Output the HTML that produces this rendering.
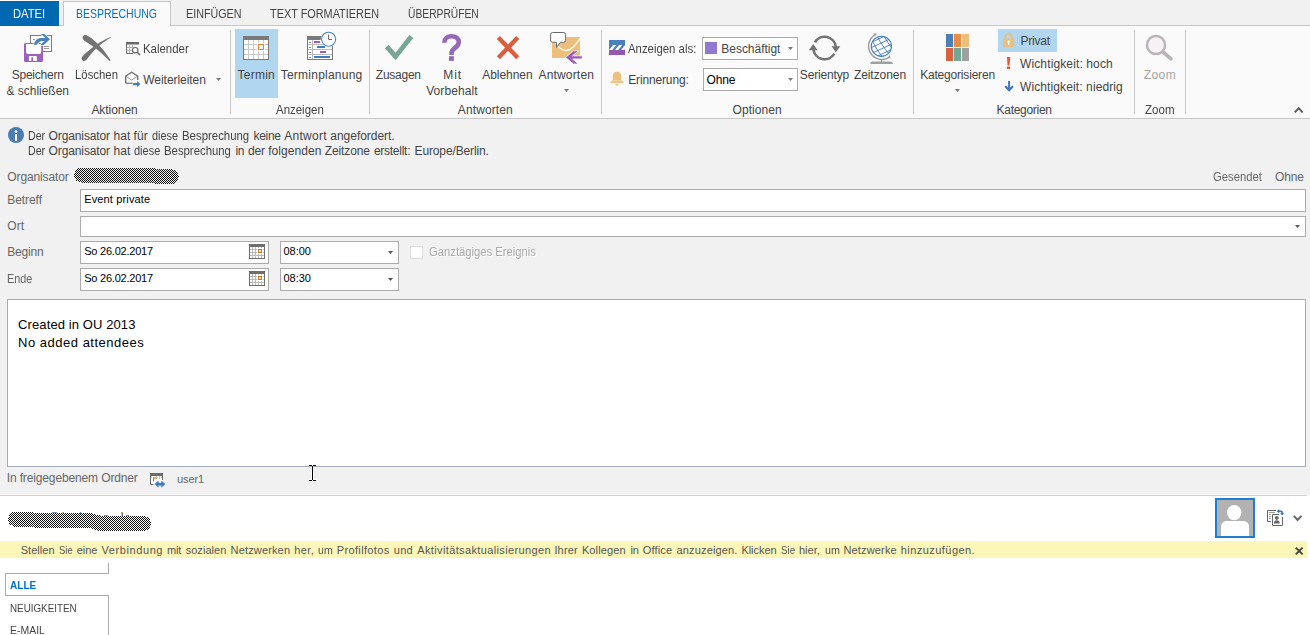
<!DOCTYPE html>
<html lang="de">
<head>
<meta charset="utf-8">
<title>Event private - Besprechung</title>
<style>
html,body{margin:0;padding:0;background:#fff;}
body{width:1310px;height:635px;overflow:hidden;font-family:"Liberation Sans",sans-serif;}
#app{position:relative;width:1310px;height:635px;overflow:hidden;background:#fff;}
#app div,#app span,#app svg{position:absolute;box-sizing:border-box;}
.t{white-space:pre;}
.inp{background:#fff;border:1px solid #ababab;}
.sep{width:1px;background:#c8c8c8;top:30px;height:84px;}
.hl{background:#b1d6f0;}
.t{transform-origin:0 0;}
.dis{text-shadow:1px 1px 0 #fff;}

</style>
</head>
<body>
<div id="app">
<div style="left:0;top:0;width:1310px;height:26px;background:#f1f1f1;"></div>
<div style="left:0;top:25px;width:1310px;height:1px;background:#c6c6c6;"></div>
<div style="left:0;top:0;width:60px;height:25px;background:#fcfbf9;"></div>
<div style="left:0;top:1px;width:59px;height:25px;background:#0067b1;"></div>
<div style="left:63px;top:1px;width:108px;height:25px;background:#fafafa;border:1px solid #c6c6c6;border-bottom:none;"></div>
<div style="left:0;top:26px;width:1310px;height:92px;background:#fafafa;"></div>
<div style="left:0;top:118px;width:1310px;height:1px;background:#c6c6c6;"></div>
<div style="left:0;top:119px;width:1310px;height:376px;background:#f1f1f1;"></div>
<div style="left:0;top:494px;width:1307px;height:1px;background:#f6f6f6;"></div>
<div style="left:0;top:495px;width:1307px;height:1px;background:#d2d2d2;"></div>
<!-- ribbon separators -->
<div class="sep" style="left:230px;"></div>
<div class="sep" style="left:369px;"></div>
<div class="sep" style="left:601px;"></div>
<div class="sep" style="left:913px;"></div>
<div class="sep" style="left:1134px;"></div>
<div class="sep" style="left:1185px;"></div>
<!-- highlights -->
<div class="hl" style="left:235px;top:29px;width:43px;height:69px;"></div>
<div class="hl" style="left:998px;top:29px;width:59px;height:23px;"></div>
<!-- ribbon combos -->
<div class="inp" style="left:702px;top:37px;width:96px;height:23px;"></div>
<div class="inp" style="left:703px;top:68px;width:95px;height:23px;"></div>
<div style="left:705px;top:42px;width:12px;height:12px;background:#8f7ad0;"></div>
<!-- form fields -->
<div class="inp" style="left:80px;top:189px;width:1226px;height:23px;"></div>
<div class="inp" style="left:80px;top:216px;width:1226px;height:21px;"></div>
<div class="inp" style="left:80px;top:241px;width:189px;height:23px;"></div>
<div class="inp" style="left:280px;top:241px;width:119px;height:23px;"></div>
<div class="inp" style="left:80px;top:268px;width:189px;height:23px;"></div>
<div class="inp" style="left:280px;top:268px;width:119px;height:23px;"></div>
<div style="left:410px;top:246px;width:13px;height:13px;background:#fdfdfd;border:1px solid #dedede;"></div>
<div class="inp" style="left:7px;top:299px;width:1299px;height:168px;border-color:#a5abb8;"></div>
<!-- yellow bar -->
<div style="left:0;top:541px;width:1307px;height:17px;background:#fcf6b8;"></div>
<!-- social tab panel -->
<div style="left:108px;top:563px;width:1px;height:11px;background:#ababab;"></div>
<div style="left:5px;top:573px;width:104px;height:1px;background:#ababab;"></div>
<div style="left:5px;top:573px;width:1px;height:23px;background:#ababab;"></div>
<div style="left:5px;top:595px;width:104px;height:1px;background:#ababab;"></div>
<div style="left:108px;top:595px;width:1px;height:40px;background:#ababab;"></div>
<!-- avatar -->
<div style="left:1215px;top:498px;width:40px;height:40px;background:#b2b2b2;border:2px solid #1e7fd0;"></div>

<!-- Save & close -->
<svg style="left:22px;top:32px" width="32" height="32" viewBox="22 32 32 32">
  <rect x="30.500" y="35.500" width="21" height="16" fill="#fff" stroke="#7d7d7d"/>
  <path d="M44 46.500h5M44 48.500h5M33 39.500h2" stroke="#9a9a9a" fill="none"/>
  <path d="M24 44.500a1.500 1.500 0 0 1 1.500-1.500h16a1.500 1.500 0 0 1 1.500 1.500v16a1.500 1.500 0 0 1-1.500 1.500h-16a1.500 1.500 0 0 1-1.500-1.500z" fill="#9a62b8"/>
  <path d="M26 44h15.200v8a2 2 0 0 1-2 2h-11.200a2 2 0 0 1-2-2z" fill="#fff"/>
  <path d="M28.900 61.100v-4.100a1 1 0 0 1 1-1h6a1 1 0 0 1 1 1v4.100z" fill="#fff"/>
  <rect x="31.300" y="57.300" width="1.800" height="3.800" fill="#9a62b8"/>
  <path d="M33.900 44.800C34.500 41 37.500 38.100 41.200 38.100L45.600 38.100L40.900 34L44.400 34L50 39.300L43.700 45L40.300 45L44.400 40.900L42.500 40.900C40 41 38 42.300 36.800 44.800Z" fill="#4a82c0" stroke="#fcfcfc" stroke-width="1.500" paint-order="stroke" stroke-linejoin="round"/>
</svg>
<!-- Delete X -->
<svg style="left:80px;top:34px" width="32" height="28" viewBox="80 34 32 28">
  <path d="M86.600 35.200C93 38.500 102 46.500 110.700 60.200L109.400 61.100C102 52.500 94 46.800 84.400 40.700C82.500 39.500 82.100 37.500 83.100 36.100C84 34.900 85.400 34.600 86.600 35.200Z" fill="#737373"/>
  <path d="M110.500 36.900C101 40.800 91 47.800 82.700 56C81.300 57.500 81.200 59.500 82.500 60.500C83.800 61.500 85.600 61.100 86.800 59.600C93 50.700 100.600 43.600 110.900 37.600Z" fill="#737373"/>
</svg>
<!-- Kalender small -->
<svg style="left:125px;top:41px" width="17" height="16" viewBox="125 41 17 16">
  <rect x="126" y="42" width="13" height="2.500" fill="#6a6a6a"/>
  <path d="M126.500 44v9.500h6.500" stroke="#6a6a6a" fill="none"/>
  <path d="M127 47.500h6M127 50.500h5M129.500 45v8M132.500 45v3" stroke="#b5b5b5" fill="none"/>
  <circle cx="135.200" cy="50.200" r="2.700" fill="#fff" stroke="#6a6a6a" stroke-width="1.200"/>
  <path d="M137.200 52.200l2.800 2.800" stroke="#6a6a6a" stroke-width="1.600" fill="none"/>
</svg>
<!-- Weiterleiten -->
<svg style="left:124px;top:70px" width="18" height="18" viewBox="124 70 18 18">
  <path d="M125.700 83.200v-7.200l6-3.800l6 3.800v4" stroke="#6a6a6a" fill="none" stroke-width="1.300"/>
  <path d="M125.700 76l6 4l6-4" stroke="#8a8a8a" fill="none" stroke-width="0.900"/>
  <path d="M125.700 83.200h7" stroke="#6a6a6a" fill="none" stroke-width="1.100"/>
  <path d="M133.200 83h3.800v-2l3.300 3.100l-3.300 3.100v-2h-3.800z" fill="#3e7cc0"/>
</svg>

<svg style="left:216px;top:78px" width="5" height="3" viewBox="0 0 5 3"><path d="M0 0h5l-2.500 3z" fill="#777"/></svg>
<!-- Termin -->
<svg style="left:243px;top:36px" width="26" height="24" viewBox="0 0 26 24" shape-rendering="crispEdges">
  <rect x="0" y="0" width="26" height="24" fill="#7a7a7a"/>
  <rect x="1" y="4" width="24" height="19" fill="#c9c9c9"/>
  <g fill="#fff">
    <rect x="1" y="4" width="4" height="4"/><rect x="6" y="4" width="4" height="4"/><rect x="11" y="4" width="4" height="4"/><rect x="16" y="4" width="4" height="4"/><rect x="21" y="4" width="4" height="4"/>
    <rect x="1" y="9" width="4" height="4"/><rect x="6" y="9" width="4" height="4"/><rect x="11" y="9" width="4" height="4"/><rect x="16" y="9" width="4" height="4"/><rect x="21" y="9" width="4" height="4"/>
    <rect x="1" y="14" width="4" height="4"/><rect x="6" y="14" width="4" height="4"/><rect x="11" y="14" width="4" height="4"/><rect x="16" y="14" width="4" height="4"/><rect x="21" y="14" width="4" height="4"/>
    <rect x="1" y="19" width="4" height="4"/><rect x="6" y="19" width="4" height="4"/><rect x="11" y="19" width="4" height="4"/><rect x="16" y="19" width="4" height="4"/><rect x="21" y="19" width="4" height="4"/>
  </g>
  <rect x="14" y="7" width="8" height="8" fill="#fff"/>
  <rect x="15" y="8" width="6" height="6" fill="#e8842f"/>
  <rect x="16" y="9" width="4" height="4" fill="#fff"/>
</svg>
<!-- Terminplanung -->
<svg style="left:306px;top:31px" width="32" height="30" viewBox="306 31 32 30">
  <g shape-rendering="crispEdges">
    <rect x="307" y="36" width="26" height="24" fill="#7a7a7a"/>
    <rect x="308" y="40" width="24" height="19" fill="#fff"/>
    <path d="M308 44.500h24M308 49.500h24M308 54.500h24M312.500 40v19" stroke="#b9b9b9" fill="none"/>
    <path d="M309 42.500h2M309 47.500h2M309 52.500h2M309 57.500h2" stroke="#8a8a8a" fill="none"/>
    <rect x="314" y="41" width="6" height="2" fill="#9a5fb8"/>
    <rect x="317" y="46" width="8" height="2" fill="#3e7cc0"/>
    <rect x="320" y="51" width="6" height="2" fill="#9a5fb8"/>
    <rect x="314" y="56" width="16" height="2" fill="#3e7cc0"/>
  </g>
  <circle cx="328.600" cy="39.200" r="7.900" fill="#fafafa"/>
  <circle cx="328.600" cy="39.200" r="7" fill="#fff" stroke="#4a86c5" stroke-width="1.100"/>
  <path d="M328.600 34.500v5h3.400" stroke="#6a6a6a" fill="none" stroke-width="1"/>
</svg>
<!-- Zusagen check -->
<svg style="left:383px;top:33px" width="32" height="29" viewBox="383 33 32 29">
  <path d="M384.900 48.200l3.500-3.400l7.200 8l13.800-17.900l3.800 3.200l-17.600 22.200z" fill="#77a697"/>
</svg>
<!-- Mit Vorbehalt ? -->
<svg style="left:440px;top:32px" width="24" height="30" viewBox="440 32 24 30">
  <path d="M444.300 42.800c0-4 3.200-6.600 7.300-6.600c4.300 0 7.200 2.500 7.200 5.800c0 2.700-1.500 4.200-3.700 5.800c-2.500 1.800-3.600 2.900-3.600 5.200v1.900" stroke="#9668b8" stroke-width="4.600" fill="none"/>
  <rect x="449" y="56.200" width="4.900" height="4.700" fill="#9668b8"/>
</svg>
<!-- Ablehnen X -->
<svg style="left:495px;top:34px" width="26" height="28" viewBox="495 34 26 28">
  <path d="M498.400 37.600l19.300 20.200M517.700 37.600l-19.300 20.200" stroke="#d9603f" stroke-width="4.400" fill="none"/>
</svg>
<!-- Antworten -->
<svg style="left:548px;top:30px" width="36" height="35" viewBox="548 30 36 35">
  <rect x="552" y="37" width="28" height="21" fill="#ecc07c"/>
  <path d="M552 38.500c4 6 8.500 12.200 13.800 12.200c5.400 0 10-5.500 14.200-12" stroke="#fff" stroke-width="1.200" fill="none"/>
  <path d="M552.600 32.500h11a2 2 0 0 1 2 2v5.800a2 2 0 0 1-2 2h-3.200l-3.900 5v-5h-3.900a2 2 0 0 1-2-2v-5.800a2 2 0 0 1 2-2z" fill="#fff" stroke="#6a6a6a" stroke-width="1"/>
  <path d="M565.500 57.400l7.900-6.600h5l-5.800 5h9.600v3.200h-9.600l5.800 5h-5z" fill="#9a5fb8" stroke="#fafafa" stroke-width="0.800"/>
</svg>
<svg style="left:564px;top:89px" width="5" height="3" viewBox="0 0 5 3"><path d="M0 0h5l-2.500 3z" fill="#777"/></svg>
<!-- Anzeigen als -->
<svg style="left:609px;top:40px" width="16" height="15" viewBox="0 0 16 15">
  <rect x="0" y="0" width="16" height="10" fill="#4a80bd"/>
  <rect x="0" y="10" width="16" height="5" fill="#9258ad"/>
  <path d="M0 10l4.200-5h3.200l-4.200 5zM6 10l4.200-5h3.200l-4.200 5zM12 10l4-4.700v3.800l-0.800 0.900z" fill="#fff"/>
</svg>
<!-- bell -->
<svg style="left:609px;top:71px" width="16" height="16" viewBox="609 71 16 16">
  <path d="M617 71.800c2.600 0 4.300 1.900 4.300 4.600v3.400c0 0.800 0.900 1.300 2.200 1.800v1.300h-13v-1.300c1.300-0.500 2.200-1 2.200-1.800v-3.400c0-2.700 1.700-4.600 4.300-4.600z" fill="#eec07e"/>
  <path d="M611.500 80.800h11" stroke="#f8e3c2" stroke-width="0.700"/>
  <path d="M615 84h4l-2 2z" fill="#eec07e"/>
</svg>
<svg style="left:788px;top:47px" width="5" height="3" viewBox="0 0 5 3"><path d="M0 0h5l-2.500 3z" fill="#777"/></svg>
<svg style="left:788px;top:78px" width="5" height="3" viewBox="0 0 5 3"><path d="M0 0h5l-2.500 3z" fill="#777"/></svg>
<!-- Serientyp -->
<svg style="left:806px;top:33px" width="37" height="30" viewBox="806 33 37 30">
  <path d="M814.900 42.400a11.200 11.200 0 0 1 20.900 4.600" stroke="#737373" stroke-width="2.600" fill="none"/>
  <path d="M831.500 46.200h8.800l-4.400 6.100z" fill="#737373"/>
  <path d="M834.300 53.600a11.200 11.200 0 0 1-20.900-4.600" stroke="#737373" stroke-width="2.600" fill="none"/>
  <path d="M808.800 50.200h8.800l-4.400-6.200z" fill="#737373"/>
</svg>
<!-- globe -->
<svg style="left:866px;top:31px" width="30" height="34" viewBox="866 31 30 34">
  <path d="M874.800 34.800a13.200 13.200 0 0 0 14.300 22.600" stroke="#a0a0a0" stroke-width="1.500" fill="none"/>
  <path d="M873.300 33.300l3.800 0.300l-2.200 2.800z" fill="#a0a0a0"/>
  <path d="M887.500 57.500l2.400-2.700l0.700 3.600z" fill="#a0a0a0"/>
  <path d="M881.500 59.500v2.500" stroke="#a0a0a0" stroke-width="1.600"/>
  <path d="M870 63.900c0.600-1.500 1.500-2.300 3-2.300h17c1.500 0 2.400 0.800 3 2.300z" fill="#a0a0a0"/>
  <circle cx="881.400" cy="46.300" r="10.100" fill="#fff" stroke="#3e7cc0" stroke-width="1.100"/>
  <clipPath id="gc"><circle cx="881.400" cy="46.300" r="10"/></clipPath>
  <g stroke="#3e7cc0" stroke-width="0.900" fill="none" clip-path="url(#gc)">
    <path d="M873 41.500l13.500-6.200M871.600 47.500l18.300-8.500M873.300 52.600l17.800-8.200M877.500 56l13-6"/>
    <path d="M877.600 37c3 5.500 6.800 11.500 11 16.500M884.300 36.600c2 3.600 4.300 7.300 7 10.800M872.600 41.500c2.500 5 5.300 9.700 9 14.500"/>
  </g>
</svg>
<!-- Kategorisieren -->
<svg style="left:946px;top:34px" width="23" height="27" viewBox="0 0 23 27" shape-rendering="crispEdges">
  <rect x="0" y="0" width="7" height="13" fill="#4a7fb8"/><rect x="8" y="0" width="7" height="13" fill="#e88b45"/><rect x="16" y="0" width="7" height="13" fill="#ecc07c"/>
  <rect x="0" y="14" width="7" height="13" fill="#d9613f"/><rect x="8" y="14" width="7" height="13" fill="#71a795"/><rect x="16" y="14" width="7" height="13" fill="#a0a0a0"/>
</svg>
<svg style="left:955px;top:89px" width="5" height="3" viewBox="0 0 5 3"><path d="M0 0h5l-2.500 3z" fill="#777"/></svg>
<!-- lock -->
<svg style="left:1002px;top:32px" width="14" height="16" viewBox="1002 32 14 16">
  <path d="M1005.400 39.500v-2.300a3.200 3.200 0 0 1 6.400 0v2.300" stroke="#ecc07c" stroke-width="1.800" fill="none"/>
  <rect x="1003" y="38.600" width="11.200" height="8.400" rx="1.200" fill="#ecc07c"/>
  <circle cx="1008.600" cy="41.800" r="1.200" fill="#fff"/>
  <rect x="1008.100" y="42" width="1" height="3" fill="#fff"/>
</svg>
<!-- ! -->
<svg style="left:1005px;top:56px" width="7" height="14" viewBox="1005 56 7 14">
  <path d="M1006.900 57h3.400l-0.700 8.500h-2z" fill="#d9603f"/>
  <rect x="1007" y="66.500" width="3.200" height="2.500" fill="#d9603f"/>
</svg>
<!-- arrow down -->
<svg style="left:1003px;top:80px" width="12" height="12" viewBox="1003 80 12 12">
  <path d="M1009.100 81v9M1005.200 86.200l3.900 4l3.900-4" stroke="#3e78b8" stroke-width="2" fill="none"/>
</svg>
<!-- zoom -->
<svg style="left:1144px;top:33px" width="30" height="29" viewBox="1144 33 30 29">
  <path d="M1163.300 52.200l7.700 6.600" stroke="#b8b4b8" stroke-width="3.700" stroke-linecap="round" fill="none"/>
  <circle cx="1156" cy="45" r="9.100" fill="#f5f1f5" stroke="#b8b4b8" stroke-width="2.500"/>
</svg>
<!-- collapse chevron -->
<svg style="left:1293px;top:106px" width="12" height="8" viewBox="1293 106 12 8">
  <path d="M1294.800 112.300l3.900-4.100l3.900 4.100" stroke="#555" stroke-width="1.900" fill="none"/>
</svg>
<!-- info icon -->
<svg style="left:7px;top:126px" width="18" height="18" viewBox="7 126 18 18">
  <circle cx="16" cy="135" r="8" fill="#4a7db3"/>
  <circle cx="16" cy="131.500" r="1.350" fill="#fff"/>
  <rect x="15" y="134.200" width="2" height="6.600" fill="#fff"/>
</svg>
<!-- redaction blobs -->
<svg style="left:70px;top:164px" width="115" height="24" viewBox="70 164 115 24">
  <defs><pattern id="chk" width="2" height="2" patternUnits="userSpaceOnUse"><rect width="1" height="1" fill="#111"/><rect x="1" y="1" width="1" height="1" fill="#111"/></pattern></defs>
  <path d="M81.700 175.200L150 175.400L160 176.600L171.300 176.600" stroke="url(#chk)" stroke-width="15" stroke-linecap="round" stroke-linejoin="round" fill="none" shape-rendering="crispEdges"/>
</svg>
<svg style="left:4px;top:506px" width="152" height="30" viewBox="4 506 152 30">
  <path d="M15.500 519.200L45 520.500L92 521L100 523.500L143.500 523.500" stroke="url(#chk)" stroke-width="15" stroke-linecap="round" stroke-linejoin="round" fill="none" shape-rendering="crispEdges"/>
</svg>
<svg style="left:50px;top:511px" width="82" height="6" viewBox="50 511 82 6" shape-rendering="crispEdges">
  <rect x="52" y="512" width="5" height="1" fill="#7a8fb0"/><rect x="62" y="512" width="2" height="1" fill="#d9a05a"/><rect x="80" y="512" width="1" height="2" fill="#4a86c5"/><rect x="121" y="512" width="2" height="4" fill="#d9a05a"/><rect x="122" y="513" width="1" height="3" fill="#4a86c5"/><rect x="126" y="515" width="3" height="1" fill="#7a8fb0"/><rect x="104" y="515" width="4" height="1" fill="#7a8fb0"/>
</svg>
<!-- Ort dropdown arrow, time arrows -->
<svg style="left:1295px;top:225px" width="5" height="3" viewBox="0 0 5 3"><path d="M0 0h5l-2.500 3z" fill="#555"/></svg>
<svg style="left:388px;top:251px" width="5" height="3" viewBox="0 0 5 3"><path d="M0 0h5l-2.500 3z" fill="#555"/></svg>
<svg style="left:388px;top:278px" width="5" height="3" viewBox="0 0 5 3"><path d="M0 0h5l-2.500 3z" fill="#555"/></svg>
<!-- date picker icons -->
<svg style="left:249px;top:244px" width="16" height="15" viewBox="0 0 16 15" shape-rendering="crispEdges">
  <rect x="0" y="0" width="16" height="15" fill="#6e6e6e"/>
  <rect x="1" y="3" width="14" height="11" fill="#b9b9b9"/>
  <g fill="#fff"><rect x="1" y="3" width="2" height="2"/><rect x="4" y="3" width="2" height="2"/><rect x="7" y="3" width="2" height="2"/><rect x="10" y="3" width="2" height="2"/><rect x="13" y="3" width="2" height="2"/>
  <rect x="1" y="6" width="2" height="2"/><rect x="4" y="6" width="2" height="2"/><rect x="7" y="6" width="2" height="2"/><rect x="10" y="6" width="2" height="2"/><rect x="13" y="6" width="2" height="2"/>
  <rect x="1" y="9" width="2" height="2"/><rect x="4" y="9" width="2" height="2"/><rect x="7" y="9" width="2" height="2"/><rect x="10" y="9" width="2" height="2"/><rect x="13" y="9" width="2" height="2"/>
  <rect x="1" y="12" width="2" height="2"/><rect x="4" y="12" width="2" height="2"/><rect x="7" y="12" width="2" height="2"/><rect x="10" y="12" width="2" height="2"/><rect x="13" y="12" width="2" height="2"/></g>
  <rect x="8" y="4" width="6" height="6" fill="#fff"/>
  <rect x="9" y="5" width="4" height="4" fill="#e36c0a"/><rect x="10" y="6" width="2" height="2" fill="#fff"/>
</svg>
<svg style="left:249px;top:271px" width="16" height="15" viewBox="0 0 16 15" shape-rendering="crispEdges">
  <rect x="0" y="0" width="16" height="15" fill="#6e6e6e"/>
  <rect x="1" y="3" width="14" height="11" fill="#b9b9b9"/>
  <g fill="#fff"><rect x="1" y="3" width="2" height="2"/><rect x="4" y="3" width="2" height="2"/><rect x="7" y="3" width="2" height="2"/><rect x="10" y="3" width="2" height="2"/><rect x="13" y="3" width="2" height="2"/>
  <rect x="1" y="6" width="2" height="2"/><rect x="4" y="6" width="2" height="2"/><rect x="7" y="6" width="2" height="2"/><rect x="10" y="6" width="2" height="2"/><rect x="13" y="6" width="2" height="2"/>
  <rect x="1" y="9" width="2" height="2"/><rect x="4" y="9" width="2" height="2"/><rect x="7" y="9" width="2" height="2"/><rect x="10" y="9" width="2" height="2"/><rect x="13" y="9" width="2" height="2"/>
  <rect x="1" y="12" width="2" height="2"/><rect x="4" y="12" width="2" height="2"/><rect x="7" y="12" width="2" height="2"/><rect x="10" y="12" width="2" height="2"/><rect x="13" y="12" width="2" height="2"/></g>
  <rect x="8" y="4" width="6" height="6" fill="#fff"/>
  <rect x="9" y="5" width="4" height="4" fill="#e36c0a"/><rect x="10" y="6" width="2" height="2" fill="#fff"/>
</svg>
<!-- shared-folder icon -->
<svg style="left:149px;top:472px" width="18" height="16" viewBox="149 472 18 16">
  <rect x="150.500" y="475.500" width="12" height="9" fill="#fff" stroke="none"/>
  <rect x="150" y="473" width="13" height="3" fill="#6a6a6a"/>
  <path d="M150.500 475v9.500h3M162.500 475v5" stroke="#6a6a6a" fill="none"/>
  <path d="M151 477.500h11M156.500 476v3M159.500 476v4" stroke="#c4c4c4" stroke-dasharray="1 1" fill="none"/>
  <path d="M153.500 481.500v-3.500h3.500" stroke="#e36c0a" stroke-width="1.100" fill="none"/>
  <path d="M154.800 484.100l3.500-3.100v1.900h3.200v-1.900l3.500 3.100l-3.500 3.100v-1.900h-3.200v1.900z" fill="#3e7cc0" stroke="#3e7cc0" stroke-width="0.500" stroke-linejoin="round"/>
</svg>
<!-- avatar silhouette -->
<svg style="left:1217px;top:500px" width="36" height="36" viewBox="1217 500 36 36">
  <g style="filter:blur(0.45px)"><ellipse cx="1234.200" cy="512.600" rx="7.200" ry="7.600" fill="#fff"/>
  <path d="M1221 536.500v-9.500c0-3.600 2.200-6 5.800-6h16.400c3.600 0 5.800 2.400 5.800 6v9.500z" fill="#fff"/></g>
</svg>
<!-- contact card icon -->
<svg style="left:1266px;top:508px" width="19" height="19" viewBox="1266 508 19 19">
  <path d="M1276 510.500h-8.500v11h3.500" stroke="#666" fill="none"/>
  <path d="M1269 512.500h6M1269 514.500h2M1269 516.500h2M1269 518.500h2" stroke="#9a9a9a" fill="none"/>
  <path d="M1279 514.500h-6.500v11h10v-8.500" stroke="#666" fill="none"/>
  <circle cx="1276.800" cy="517.900" r="1.900" fill="#666"/>
  <path d="M1273.800 523.600c0-2.200 1.200-3.400 3-3.400s3 1.200 3 3.400z" fill="#666"/>
  <path d="M1277 511.200l2-1.500v1h1.800c1.200 0 1.800 0.700 1.800 1.800v0.800h0.900l-1.400 1.900l-1.400-1.900h0.900v-0.800c0-0.500-0.300-0.800-0.800-0.800h-1.800v1z" fill="#2f6fb8" stroke="#2f6fb8" stroke-width="0.600"/>
</svg>
<svg style="left:1292px;top:514px" width="12" height="8" viewBox="1292 514 12 8">
  <path d="M1293.800 515.800l3.800 4.200l3.800-4.200" stroke="#666" stroke-width="1.900" fill="none"/>
</svg>
<!-- yellow bar close x -->
<svg style="left:1294px;top:546px" width="11" height="10" viewBox="1294 546 11 10">
  <path d="M1295.800 547.600l6.800 6.800M1302.600 547.600l-6.800 6.800" stroke="#444" stroke-width="1.900" fill="none"/>
</svg>
<!-- text cursor (I-beam) captured in screenshot -->
<svg style="left:308px;top:464px" width="9" height="18" viewBox="308 464 9 18" shape-rendering="crispEdges">
  <path d="M309 480.500h3M313 480.500h3M312.500 470v10" stroke="#fff" stroke-width="3" fill="none"/>
  <path d="M309 465.500h3M313 465.500h3M309 480.500h3M313 480.500h3M312.500 466v14" stroke="#000" stroke-width="1" fill="none"/>
</svg>

<span class="t" style="left:13.2px;top:7px;font-size:12px;line-height:14px;transform:scaleX(0.9317);color:#fff">DATEI</span>
<span class="t" style="left:76.1px;top:7px;font-size:12px;line-height:14px;transform:scaleX(0.8739);color:#0072c6">BESPRECHUNG</span>
<span class="t" style="left:185.8px;top:7px;font-size:12px;line-height:14px;transform:scaleX(0.8949);color:#444">EINFÜGEN</span>
<span class="t" style="left:270.1px;top:7px;font-size:12px;line-height:14px;transform:scaleX(0.9066);color:#444">TEXT FORMATIEREN</span>
<span class="t" style="left:408.2px;top:7px;font-size:12px;line-height:14px;transform:scaleX(0.8562);color:#444">ÜBERPRÜFEN</span>
<span class="t" style="left:11.7px;top:68px;font-size:12px;line-height:14px;letter-spacing:-0.231px;color:#444">Speichern</span>
<span class="t" style="left:6.6px;top:84px;font-size:12px;line-height:14px;letter-spacing:-0.030px;color:#444">&amp; schließen</span>
<span class="t" style="left:74.6px;top:68px;font-size:12px;line-height:14px;transform:scaleX(0.9477);color:#444">Löschen</span>
<span class="t" style="left:143.3px;top:42px;font-size:12px;line-height:14px;transform:scaleX(0.9512);color:#444">Kalender</span>
<span class="t" style="left:143.3px;top:73px;font-size:12px;line-height:14px;letter-spacing:-0.049px;color:#444">Weiterleiten</span>
<span class="t" style="left:91.4px;top:103px;font-size:12px;line-height:14px;letter-spacing:-0.058px;color:#444">Aktionen</span>
<span class="t" style="left:237.6px;top:68px;font-size:12px;line-height:14px;letter-spacing:0.237px;color:#444">Termin</span>
<span class="t" style="left:280.7px;top:68px;font-size:12px;line-height:14px;letter-spacing:0.240px;color:#444">Terminplanung</span>
<span class="t" style="left:276.1px;top:103px;font-size:12px;line-height:14px;transform:scaleX(0.9551);color:#444">Anzeigen</span>
<span class="t" style="left:375.8px;top:68px;font-size:12px;line-height:14px;letter-spacing:-0.251px;color:#444">Zusagen</span>
<span class="t" style="left:443.2px;top:68px;font-size:12px;line-height:14px;letter-spacing:0.950px;color:#444">Mit</span>
<span class="t" style="left:426.2px;top:84px;font-size:12px;line-height:14px;letter-spacing:0.085px;color:#444">Vorbehalt</span>
<span class="t" style="left:482.2px;top:68px;font-size:12px;line-height:14px;letter-spacing:-0.046px;color:#444">Ablehnen</span>
<span class="t" style="left:538.5px;top:68px;font-size:12px;line-height:14px;letter-spacing:0.171px;color:#444">Antworten</span>
<span class="t" style="left:457.8px;top:103px;font-size:12px;line-height:14px;letter-spacing:0.121px;color:#444">Antworten</span>
<span class="t" style="left:628.2px;top:42px;font-size:12px;line-height:14px;transform:scaleX(0.9480);color:#444">Anzeigen als:</span>
<span class="t" style="left:721.3px;top:42px;font-size:12px;line-height:14px;letter-spacing:-0.027px;color:#444">Beschäftigt</span>
<span class="t" style="left:628.2px;top:73px;font-size:12px;line-height:14px;letter-spacing:-0.145px;color:#444">Erinnerung:</span>
<span class="t" style="left:706.6px;top:73px;font-size:12px;line-height:14px;letter-spacing:-0.153px;color:#000">Ohne</span>
<span class="t" style="left:732.6px;top:103px;font-size:12px;line-height:14px;letter-spacing:0.057px;color:#444">Optionen</span>
<span class="t" style="left:799.8px;top:68px;font-size:12px;line-height:14px;letter-spacing:-0.150px;color:#444">Serientyp</span>
<span class="t" style="left:853.9px;top:68px;font-size:12px;line-height:14px;letter-spacing:-0.063px;color:#444">Zeitzonen</span>
<span class="t" style="left:920.2px;top:68px;font-size:12px;line-height:14px;letter-spacing:-0.192px;color:#444">Kategorisieren</span>
<span class="t" style="left:1020.4px;top:34px;font-size:12px;line-height:14px;letter-spacing:-0.177px;color:#444">Privat</span>
<span class="t" style="left:1020.0px;top:57px;font-size:12px;line-height:14px;letter-spacing:0.125px;color:#444">Wichtigkeit: hoch</span>
<span class="t" style="left:1020.0px;top:80px;font-size:12px;line-height:14px;letter-spacing:0.110px;color:#444">Wichtigkeit: niedrig</span>
<span class="t" style="left:996.6px;top:103px;font-size:12px;line-height:14px;letter-spacing:-0.294px;color:#444">Kategorien</span>
<span class="t" style="left:1143.7px;top:68px;font-size:12px;line-height:14px;letter-spacing:0.438px;color:#a6a6a6">Zoom</span>
<span class="t" style="left:1144.6px;top:103px;font-size:12px;line-height:14px;transform:scaleX(0.9613);color:#444">Zoom</span>
<span class="t" style="left:27.5px;top:129px;font-size:12px;line-height:14px;transform:scaleX(0.8840);color:#444">Der</span>
<span class="t" style="left:48.6px;top:129px;font-size:12px;line-height:14px;letter-spacing:-0.120px;color:#444">Organisator</span>
<span class="t" style="left:113.6px;top:129px;font-size:12px;line-height:14px;letter-spacing:0.056px;color:#444">hat</span>
<span class="t" style="left:133.4px;top:129px;font-size:12px;line-height:14px;letter-spacing:0.192px;color:#444">für</span>
<span class="t" style="left:151.5px;top:129px;font-size:12px;line-height:14px;transform:scaleX(0.9098);color:#444">diese</span>
<span class="t" style="left:182.3px;top:129px;font-size:12px;line-height:14px;transform:scaleX(0.9502);color:#444">Besprechung</span>
<span class="t" style="left:253.5px;top:129px;font-size:12px;line-height:14px;letter-spacing:-0.297px;color:#444">keine</span>
<span class="t" style="left:284.2px;top:129px;font-size:12px;line-height:14px;letter-spacing:0.285px;color:#444">Antwort</span>
<span class="t" style="left:330.3px;top:129px;font-size:12px;line-height:14px;letter-spacing:-0.029px;color:#444">angefordert.</span>
<span class="t" style="left:27.5px;top:144px;font-size:12px;line-height:14px;transform:scaleX(0.8840);color:#444">Der</span>
<span class="t" style="left:48.6px;top:144px;font-size:12px;line-height:14px;letter-spacing:-0.120px;color:#444">Organisator</span>
<span class="t" style="left:113.6px;top:144px;font-size:12px;line-height:14px;letter-spacing:0.056px;color:#444">hat</span>
<span class="t" style="left:133.9px;top:144px;font-size:12px;line-height:14px;transform:scaleX(0.9168);color:#444">diese</span>
<span class="t" style="left:164.2px;top:144px;font-size:12px;line-height:14px;transform:scaleX(0.9460);color:#444">Besprechung</span>
<span class="t" style="left:235.4px;top:144px;font-size:12px;line-height:14px;letter-spacing:-0.244px;color:#444">in</span>
<span class="t" style="left:248.0px;top:144px;font-size:12px;line-height:14px;letter-spacing:-0.172px;color:#444">der</span>
<span class="t" style="left:268.2px;top:144px;font-size:12px;line-height:14px;letter-spacing:0.060px;color:#444">folgenden</span>
<span class="t" style="left:324.8px;top:144px;font-size:12px;line-height:14px;letter-spacing:-0.119px;color:#444">Zeitzone</span>
<span class="t" style="left:373.9px;top:144px;font-size:12px;line-height:14px;letter-spacing:-0.261px;color:#444">erstellt:</span>
<span class="t" style="left:414.6px;top:144px;font-size:12px;line-height:14px;letter-spacing:-0.142px;color:#444">Europe/Berlin.</span>
<span class="t" style="left:7.3px;top:170px;font-size:12px;line-height:14px;letter-spacing:-0.120px;color:#666">Organisator</span>
<span class="t" style="left:7.3px;top:193px;font-size:12px;line-height:14px;letter-spacing:-0.073px;color:#666">Betreff</span>
<span class="t" style="left:7.3px;top:219px;font-size:12px;line-height:14px;letter-spacing:0.064px;color:#666">Ort</span>
<span class="t" style="left:7.3px;top:245px;font-size:12px;line-height:14px;letter-spacing:-0.215px;color:#666">Beginn</span>
<span class="t" style="left:7.3px;top:272px;font-size:12px;line-height:14px;transform:scaleX(0.9061);color:#666">Ende</span>
<span class="t" style="left:1213.4px;top:170px;font-size:12px;line-height:14px;transform:scaleX(0.9395);color:#666">Gesendet</span>
<span class="t" style="left:1275.0px;top:170px;font-size:12px;line-height:14px;letter-spacing:-0.153px;color:#666">Ohne</span>
<span class="t" style="left:84.2px;top:193px;font-size:11px;line-height:12px;letter-spacing:0.150px;color:#000">Event private</span>
<span class="t" style="left:84.2px;top:245px;font-size:11px;line-height:12px;letter-spacing:-0.223px;color:#000">So 26.02.2017</span>
<span class="t" style="left:84.2px;top:272px;font-size:11px;line-height:12px;letter-spacing:-0.223px;color:#000">So 26.02.2017</span>
<span class="t" style="left:283.5px;top:245px;font-size:11px;line-height:12px;letter-spacing:-0.033px;color:#000">08:00</span>
<span class="t" style="left:283.5px;top:272px;font-size:11px;line-height:12px;letter-spacing:-0.033px;color:#000">08:30</span>
<span class="t dis" style="left:428.8px;top:245px;font-size:12px;line-height:14px;transform:scaleX(0.9380);color:#a9a9a9">Ganztägiges Ereignis</span>
<span class="t" style="left:18.1px;top:317px;font-size:13px;line-height:15px;letter-spacing:0.099px;color:#000">Created in OU 2013</span>
<span class="t" style="left:18.1px;top:335px;font-size:13px;line-height:15px;letter-spacing:0.505px;color:#000">No added attendees</span>
<span class="t" style="left:6.7px;top:471px;font-size:12px;line-height:14px;letter-spacing:-0.132px;color:#666">In freigegebenem Ordner</span>
<span class="t" style="left:177.1px;top:473px;font-size:11px;line-height:12px;letter-spacing:-0.133px;color:#666">user1</span>
<span class="t" style="left:20.7px;top:544px;font-size:11px;line-height:12px;letter-spacing:0.043px;color:#555">Stellen</span>
<span class="t" style="left:58.8px;top:544px;font-size:11px;line-height:12px;transform:scaleX(0.8613);color:#555">Sie</span>
<span class="t" style="left:76.8px;top:544px;font-size:11px;line-height:12px;letter-spacing:-0.066px;color:#555">eine</span>
<span class="t" style="left:101.5px;top:544px;font-size:11px;line-height:12px;letter-spacing:0.592px;color:#555">Verbindung</span>
<span class="t" style="left:166.9px;top:544px;font-size:11px;line-height:12px;letter-spacing:-0.136px;color:#555">mit</span>
<span class="t" style="left:185.7px;top:544px;font-size:11px;line-height:12px;letter-spacing:0.034px;color:#555">sozialen</span>
<span class="t" style="left:230.6px;top:544px;font-size:11px;line-height:12px;letter-spacing:0.147px;color:#555">Netzwerken</span>
<span class="t" style="left:294.2px;top:544px;font-size:11px;line-height:12px;letter-spacing:0.414px;color:#555">her,</span>
<span class="t" style="left:317.6px;top:544px;font-size:11px;line-height:12px;transform:scaleX(0.9620);color:#555">um</span>
<span class="t" style="left:336.8px;top:544px;font-size:11px;line-height:12px;letter-spacing:0.348px;color:#555">Profilfotos</span>
<span class="t" style="left:393.8px;top:544px;font-size:11px;line-height:12px;letter-spacing:0.220px;color:#555">und</span>
<span class="t" style="left:417.2px;top:544px;font-size:11px;line-height:12px;letter-spacing:0.375px;color:#555">Aktivitätsaktualisierungen</span>
<span class="t" style="left:554.4px;top:544px;font-size:11px;line-height:12px;letter-spacing:0.169px;color:#555">Ihrer</span>
<span class="t" style="left:581.9px;top:544px;font-size:11px;line-height:12px;letter-spacing:0.125px;color:#555">Kollegen</span>
<span class="t" style="left:630.4px;top:544px;font-size:11px;line-height:12px;letter-spacing:-0.062px;color:#555">in</span>
<span class="t" style="left:642.8px;top:544px;font-size:11px;line-height:12px;letter-spacing:0.154px;color:#555">Office</span>
<span class="t" style="left:676.6px;top:544px;font-size:11px;line-height:12px;letter-spacing:0.137px;color:#555">anzuzeigen.</span>
<span class="t" style="left:741.4px;top:544px;font-size:11px;line-height:12px;letter-spacing:-0.045px;color:#555">Klicken</span>
<span class="t" style="left:780.8px;top:544px;font-size:11px;line-height:12px;transform:scaleX(0.8864);color:#555">Sie</span>
<span class="t" style="left:799.0px;top:544px;font-size:11px;line-height:12px;letter-spacing:0.001px;color:#555">hier,</span>
<span class="t" style="left:824.5px;top:544px;font-size:11px;line-height:12px;transform:scaleX(0.9751);color:#555">um</span>
<span class="t" style="left:843.5px;top:544px;font-size:11px;line-height:12px;letter-spacing:0.154px;color:#555">Netzwerke</span>
<span class="t" style="left:900.7px;top:544px;font-size:11px;line-height:12px;letter-spacing:0.458px;color:#555">hinzuzufügen.</span>
<span class="t" style="left:10.1px;top:579px;font-size:11px;line-height:12px;transform:scaleX(0.9153);color:#0072c6;font-weight:bold">ALLE</span>
<span class="t" style="left:10.1px;top:602px;font-size:11px;line-height:12px;transform:scaleX(0.8930);color:#444">NEUIGKEITEN</span>
<span class="t" style="left:10.1px;top:624px;font-size:11px;line-height:12px;transform:scaleX(0.9513);color:#444">E-MAIL</span>
</div>
</body>
</html>
